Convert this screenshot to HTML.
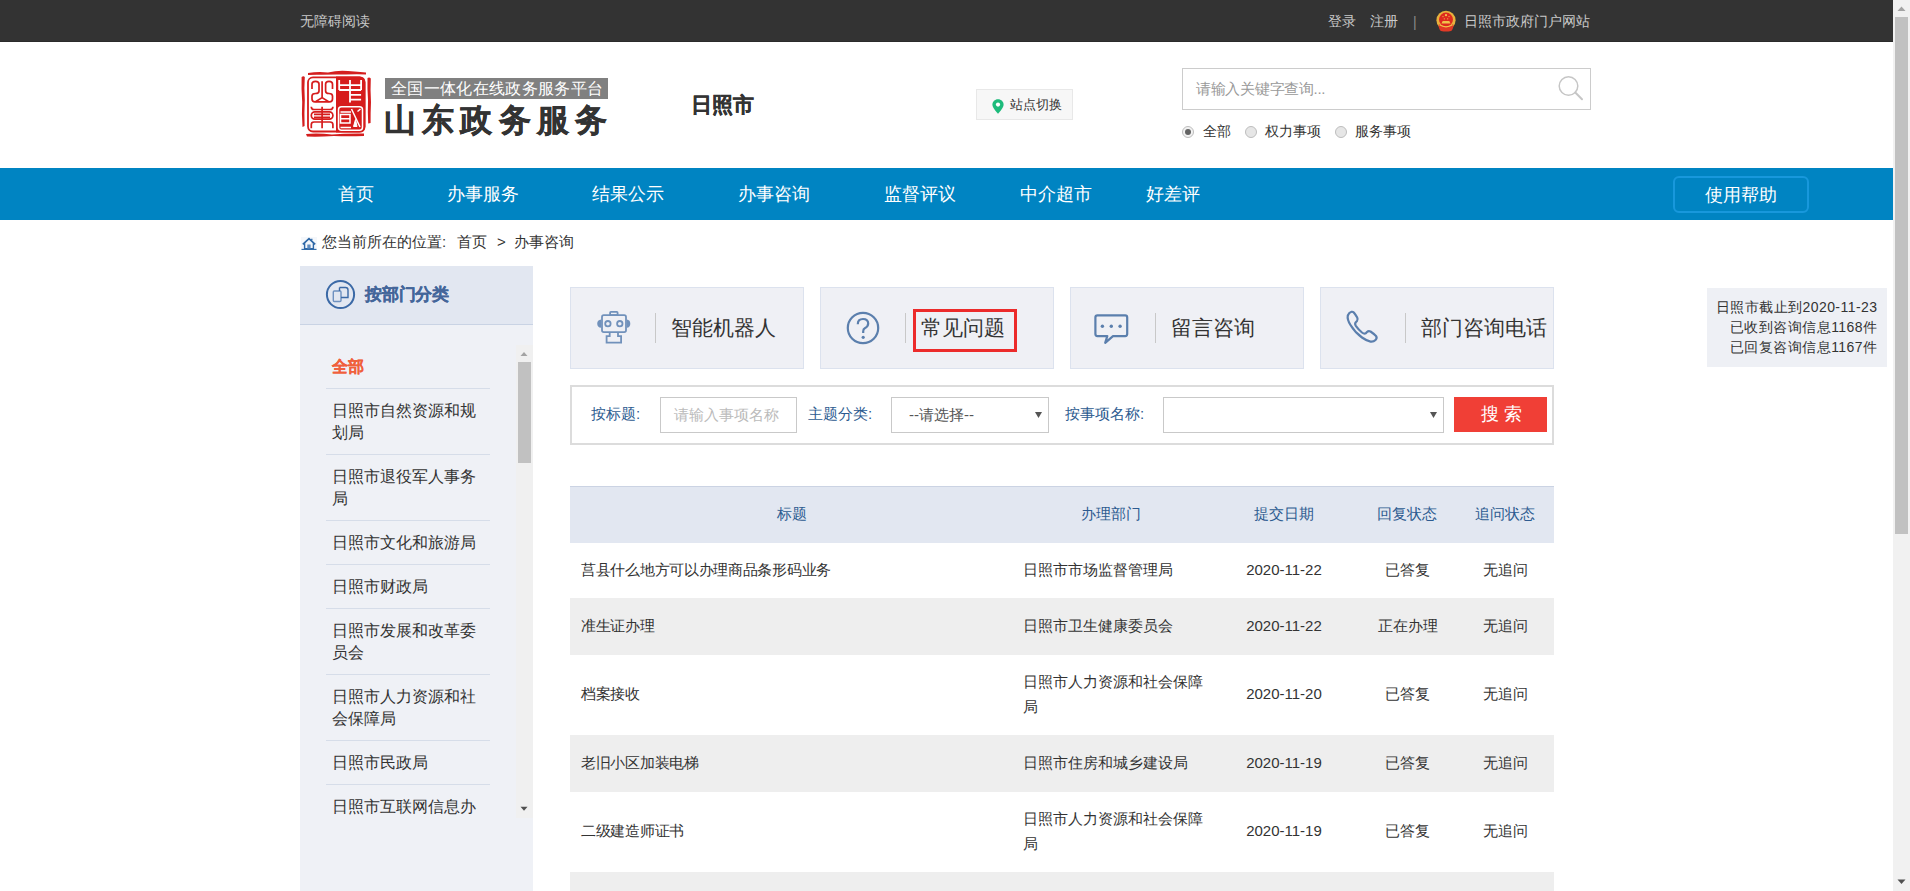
<!DOCTYPE html>
<html><head><meta charset="utf-8">
<style>
*{margin:0;padding:0;box-sizing:border-box}
html,body{width:1910px;height:891px;overflow:hidden;background:#fff}
body{font-family:"Liberation Sans",sans-serif;color:#333;position:relative}
.a{position:absolute;white-space:nowrap}
/* top bar */
#top{position:absolute;left:0;top:0;width:1893px;height:42px;background:#333;border-bottom:1px solid #2b2b2b}
#top .t{position:absolute;top:11px;font-size:14px;line-height:20px;color:#c9c9c9;white-space:nowrap}
/* header */
#banner{position:absolute;left:385px;top:78px;width:223px;height:21px;background:#808080;color:#fff;font-size:16px;line-height:21px;padding-left:6px;letter-spacing:0.35px;white-space:nowrap}
#title{position:absolute;left:384px;top:100px;font-size:32px;line-height:40px;font-weight:bold;-webkit-text-stroke:0.4px #333;color:#333;letter-spacing:6.2px;white-space:nowrap}
#city{position:absolute;left:691px;top:91px;font-size:21px;line-height:28px;font-weight:bold;-webkit-text-stroke:0.3px #333;color:#333;white-space:nowrap}
#switch{position:absolute;left:976px;top:89px;width:97px;height:31px;background:#f7f7f7;border:1px solid #e8e8e8}
#switch span{position:absolute;left:33px;top:6px;font-size:13px;line-height:18px;color:#333}
#search{position:absolute;left:1182px;top:68px;width:409px;height:42px;border:1px solid #ccc}
#search span{position:absolute;left:13px;top:10px;letter-spacing:-0.3px;font-size:15px;line-height:20px;color:#999}
.radio{position:absolute;top:126px;width:12px;height:12px;border-radius:50%;border:1px solid #bdbdbd;background:#e6e6e6}
.rl{position:absolute;top:121px;font-size:14px;line-height:20px;color:#333}
/* nav */
#nav{position:absolute;left:0;top:168px;width:1893px;height:52px;background:#0084c2}
#nav .n{position:absolute;top:13px;font-size:18px;line-height:26px;color:#fff;white-space:nowrap}
#help{position:absolute;left:1673px;top:8px;width:136px;height:37px;border:2px solid #1898dc;border-radius:6px}
/* breadcrumb */
#crumb{position:absolute;top:232px;font-size:15px;line-height:20px;color:#333;white-space:nowrap}
/* sidebar */
#side{position:absolute;left:300px;top:266px;width:233px;height:625px;background:#eff1f6}
#sidehd{position:absolute;left:0;top:0;width:233px;height:59px;background:#e2e7f1;border-bottom:1px solid #c9d3e4}
#sidehd span{position:absolute;left:65px;top:17px;font-size:17px;line-height:24px;font-weight:bold;color:#44669a;-webkit-text-stroke:0.25px #44669a;letter-spacing:-0.2px}
.si{position:absolute;left:26px;width:164px;height:45px;border-bottom:1px solid #d6dde9;font-size:16px;line-height:22px;padding:12px 0 0 6px;color:#333}
/* cards */
.card{position:absolute;top:287px;width:234px;height:82px;background:#eff0f5;border:1px solid #dce2ee}
.card .dv{position:absolute;left:84px;top:25px;width:1px;height:30px;background:#c8c8c8}
.card .ct{position:absolute;left:100px;top:25px;font-size:21px;line-height:30px;color:#333;white-space:nowrap}
.card svg{position:absolute}
/* form */
#form{position:absolute;left:570px;top:385px;width:984px;height:60px;border:2px solid #dcdcdc}
.fl{position:absolute;top:404px;font-size:15px;line-height:20px;color:#2d5b90;white-space:nowrap}
.fi{position:absolute;top:397px;height:36px;border:1px solid #c9c9c9;background:#fff}
/* table */
#thead{position:absolute;left:570px;top:486px;width:984px;height:57px;background:#e2e7f1;border-top:1px solid #cbd3e3}
.th{position:absolute;top:504px;font-size:15px;line-height:20px;color:#2d5b90;white-space:nowrap}
.row{position:absolute;left:570px;width:984px}
.td{position:absolute;font-size:15px;line-height:25px;color:#333;white-space:nowrap}
.td.c{text-align:center;font-size:15px}
/* info */
#info{position:absolute;left:1707px;top:288px;width:180px;height:79px;background:#eef0f5;text-align:right;padding:9px 9.5px 0 0;font-size:14px;line-height:20px;letter-spacing:0.45px;color:#333}
/* scrollbar */
#sb{position:absolute;left:1893px;top:0;width:17px;height:891px;background:#f1f1f1}
#sbthumb{position:absolute;left:2px;top:17px;width:13px;height:517px;background:#c1c1c1}
</style></head><body>

<div id="top">
  <div class="t" style="left:300px">无障碍阅读</div>
  <div class="t" style="left:1328px">登录</div>
  <div class="t" style="left:1370px">注册</div>
  <div class="t" style="left:1413px;top:12px;color:#8a8a8a">|</div>
  <svg style="position:absolute;left:1436px;top:10px" width="21" height="22" viewBox="0 0 21 22">
    <circle cx="10" cy="10.3" r="9.6" fill="#e8b13c"/>
    <circle cx="10" cy="9.6" r="7" fill="#dd2a1f"/>
    <circle cx="10" cy="5.2" r="1.1" fill="#f3c44b"/>
    <circle cx="7" cy="6.6" r="0.6" fill="#f3c44b"/><circle cx="13" cy="6.6" r="0.6" fill="#f3c44b"/>
    <circle cx="8.3" cy="8.8" r="0.6" fill="#f3c44b"/><circle cx="11.7" cy="8.8" r="0.6" fill="#f3c44b"/>
    <path d="M5.5 13.6 L14.5 13.6 L13.3 11 L6.7 11Z" fill="#f0c24a"/>
    <path d="M3 14 Q10 18.5 17 14 L17.5 16 Q16.5 20.5 15 21 Q10 22 5 21 Q3.5 20.5 2.5 16Z" fill="#e13a26"/>
    <path d="M3.5 14.8 Q10 18.8 16.5 14.8" stroke="#f3c44b" stroke-width="1.3" fill="none"/>
  </svg>
  <div class="t" style="left:1464px">日照市政府门户网站</div>
</div>

<!-- logo seal -->
<svg style="position:absolute;left:298px;top:66px" width="76" height="76" viewBox="0 0 76 76">
  <g fill="#d41e1e">
    <path d="M10 7 Q20 5.5 30 6.5 Q40 4 50 5 Q60 5.5 68 6.5 L68 8.5 Q58 8 48 8.6 Q36 8.2 24 8.8 Q16 8.6 10 9Z"/>
    <path d="M3.6 11 Q5.5 9.5 6.8 11 Q6 22 6.8 34 Q6.2 46 6.6 60 L4.5 61 Q3.5 48 4.2 36 Q3.2 22 3.6 11Z"/>
    <path d="M69.5 12 Q71.5 11 72.8 12.5 Q72.2 24 73 36 Q72.5 47 72.6 57 L70.2 57.5 Q69.6 46 70 34 Q69.2 22 69.5 12Z"/>
    <path d="M8 68 Q20 67 34 68.5 Q48 67.2 66 67.5 L66 70 Q50 70.5 36 70 Q20 71 9 70.5Z"/>
  </g>
  <rect x="10" y="11.3" width="56.5" height="54.2" rx="5" fill="#fff" stroke="#d61c1c" stroke-width="1.8"/>
  <path d="M38 10.4 H61.5 Q67.4 10.4 67.4 16.4 V60.4 Q67.4 66.4 61.5 66.4 H38Z" fill="#d61c1c"/>
  <g stroke="#fff" stroke-width="1.8" fill="none">
    <path d="M41.2 14 V24 M63.1 14 V24 M52 14 V36.5 M41.2 19.1 H63.1 M41.2 24 H63.1 M52 28.9 H63.1 M52 33.7 H63.1"/>
  </g>
  <g stroke="#fff" stroke-width="1.5" fill="none">
    <rect x="40.5" y="40.7" width="24" height="23.6" rx="3"/>
    <path d="M42.5 45.9 H53 M42.5 48.5 H52 V57 H42.5Z M42.5 52.7 H52 M42.5 61.5 H53 M53.5 43 L62 61 M59.5 45.5 L62.5 43"/>
    <path d="M55.5 60.5 L57.5 53.5 L59 60.5Z" fill="#fff" stroke-width="1"/>
  </g>
  <g stroke="#d61c1c" stroke-width="1.7" fill="none">
    <path d="M14 23 V18 Q14 15.3 17.5 15.3 Q21 15.3 21 18 V25 Q21 27.5 17.5 27.5 Q14 27.5 14 30 V33 Q14 35.8 17 35.8 H31.5 Q34.5 35.8 34.5 33 V30 Q34.5 27.5 31 27.5 Q27.6 27.5 27.6 25 V18 Q27.6 15.3 31 15.3 Q34.5 15.3 34.5 18 V23"/>
    <path d="M24.1 15.3 V31.6 L17.5 35.8 M24.1 31.6 L30.7 35.8"/>
    <path d="M24.1 40.7 V62.2 M13.3 40.7 Q13.3 43.5 16 43.5 H32 Q34.9 43.5 34.9 40.7"/>
    <rect x="13.3" y="45.9" width="21.6" height="7.3" rx="3.6"/>
    <path d="M16 48.3 H32 M16 51.3 H32 M13.3 62.2 V58.5 Q13.3 56 16 56 H32 Q34.9 56 34.9 58.5 V62.2"/>
  </g>
</svg>
<div id="banner">全国一体化在线政务服务平台</div>
<div id="title">山东政务服务</div>
<div id="city">日照市</div>

<div id="switch">
  <svg style="position:absolute;left:15px;top:9px" width="12" height="15" viewBox="0 0 12 15">
    <path d="M6 0.3 C2.8 0.3 0.4 2.7 0.4 5.8 C0.4 9.2 6 14.7 6 14.7 C6 14.7 11.6 9.2 11.6 5.8 C11.6 2.7 9.2 0.3 6 0.3Z" fill="#1dbb7b"/>
    <circle cx="6" cy="5.6" r="2.1" fill="#fff"/>
  </svg>
  <span>站点切换</span>
</div>

<div id="search">
  <span>请输入关键字查询...</span>
  <svg style="position:absolute;left:374px;top:6px" width="28" height="28" viewBox="0 0 28 28">
    <circle cx="11.5" cy="11" r="9.3" fill="none" stroke="#c6c6c6" stroke-width="1.5"/>
    <path d="M18.3 17.5 L25 24.2" stroke="#c6c6c6" stroke-width="2" stroke-linecap="round"/>
  </svg>
</div>
<div class="radio" style="left:1182px;background:#f2f2f2"><div style="position:absolute;left:2px;top:2px;width:6px;height:6px;border-radius:50%;background:#636363"></div></div>
<div class="rl" style="left:1203px">全部</div>
<div class="radio" style="left:1245px"></div>
<div class="rl" style="left:1265px">权力事项</div>
<div class="radio" style="left:1335px"></div>
<div class="rl" style="left:1355px">服务事项</div>

<div id="nav">
  <div class="n" style="left:338px">首页</div>
  <div class="n" style="left:447px">办事服务</div>
  <div class="n" style="left:592px">结果公示</div>
  <div class="n" style="left:738px">办事咨询</div>
  <div class="n" style="left:884px">监督评议</div>
  <div class="n" style="left:1020px">中介超市</div>
  <div class="n" style="left:1146px">好差评</div>
  <div id="help"><div class="n" style="left:30px;top:4px">使用帮助</div></div>
</div>

<!-- breadcrumb -->
<svg style="position:absolute;left:301px;top:237px" width="16" height="13" viewBox="0 0 16 13">
  <rect x="0" y="0" width="16" height="13" fill="#f4f7fb"/>
  <path d="M1.8 7.3 L8 1.6 L14.2 7.3" fill="none" stroke="#2d67a6" stroke-width="1.7"/>
  <path d="M10.8 3.2 V1.8" stroke="#2d67a6" stroke-width="1.3"/>
  <path d="M3.6 6.2 V11.8 H12.4 V6.2" fill="none" stroke="#2d67a6" stroke-width="1.4"/>
  <rect x="6.3" y="7.5" width="3.3" height="4.2" fill="#5f8cbf"/>
  <path d="M0.5 12.4 H15.5" stroke="#2d67a6" stroke-width="1.1"/>
</svg>
<div id="crumb" style="left:322px">您当前所在的位置:</div>
<div id="crumb" style="left:457px">首页</div>
<div id="crumb" style="left:497px">&gt;</div>
<div id="crumb" style="left:514px">办事咨询</div>

<!-- sidebar -->
<div id="side">
  <div id="sidehd">
    <svg style="position:absolute;left:25px;top:13px" width="31" height="31" viewBox="0 0 31 31">
      <circle cx="15.5" cy="15.5" r="13.6" fill="none" stroke="#3b69a6" stroke-width="2"/>
      <rect x="8.3" y="12" width="7.7" height="10.5" rx="1" fill="none" stroke="#6e91c0" stroke-width="1.4"/>
      <path d="M14.5 8.5 H20.5 Q23 8.5 23 11 V18.5 H16" fill="none" stroke="#3b69a6" stroke-width="1.4"/>
      <path d="M14.5 8.5 V12" fill="none" stroke="#3b69a6" stroke-width="1.4"/>
    </svg>
    <span>按部门分类</span>
  </div>
  <div class="si" style="top:78px;color:#f0603c;font-weight:bold;-webkit-text-stroke:0.2px #f0603c">全部</div>
  <div class="si" style="top:122px;height:67px">日照市自然资源和规<br>划局</div>
  <div class="si" style="top:188px;height:67px">日照市退役军人事务<br>局</div>
  <div class="si" style="top:254px">日照市文化和旅游局</div>
  <div class="si" style="top:298px">日照市财政局</div>
  <div class="si" style="top:342px;height:67px">日照市发展和改革委<br>员会</div>
  <div class="si" style="top:408px;height:67px">日照市人力资源和社<br>会保障局</div>
  <div class="si" style="top:474px">日照市民政局</div>
  <div class="si" style="top:518px;border-bottom:none">日照市互联网信息办</div>
  <!-- inner scrollbar -->
  <div style="position:absolute;left:216px;top:79px;width:17px;height:473px;background:#f0f0f0"></div>
  <div style="position:absolute;left:218px;top:96px;width:13px;height:101px;background:#c1c1c1"></div>
  <svg style="position:absolute;left:216px;top:79px" width="17" height="473"><path d="M4.5 11 L8 7 L11.5 11Z" fill="#a3a3a3"/><path d="M4.5 461.8 H11.5 L8 465.8Z" fill="#505050"/></svg>
</div>

<!-- cards -->
<div class="card" style="left:570px">
  <svg style="left:26px;top:23px" width="35" height="35" viewBox="0 0 35 35">
    <g fill="none" stroke="#7191bb" stroke-width="1.8">
      <rect x="5" y="4.2" width="24" height="16.9" rx="1.8"/>
      <rect x="13.1" y="0.9" width="7.5" height="3.3" rx="0.8"/>
      <circle cx="10.9" cy="12.7" r="2.7"/>
      <circle cx="22.8" cy="12.7" r="2.7"/>
      <path d="M12.7 21.1 V25.2 H9.6 V31.7 H24.1 V25.2 H21 V21.1"/>
    </g>
    <path d="M4.2 8.6 Q0.2 9 0.2 12.65 Q0.2 16.3 4.2 16.7Z" fill="#7191bb"/>
    <path d="M29.8 8.6 Q33.3 9 33.3 12.65 Q33.3 16.3 29.8 16.7Z" fill="#7191bb"/>
  </svg>
  <div class="dv"></div>
  <div class="ct">智能机器人</div>
</div>
<div class="card" style="left:820px">
  <svg style="left:25px;top:23px" width="34" height="34" viewBox="0 0 34 34">
    <circle cx="17" cy="17" r="15.2" fill="none" stroke="#5b7fad" stroke-width="2.2"/>
    <path d="M11.8 13.2 Q11.8 8 17 8 Q22.2 8 22.2 12.6 Q22.2 15.6 18.8 17.2 Q17.2 18 17.2 20.5 V22" fill="none" stroke="#5b7fad" stroke-width="2.2"/>
    <circle cx="17.2" cy="26.3" r="1.6" fill="#5b7fad"/>
  </svg>
  <div class="dv"></div>
  <div style="position:absolute;left:92px;top:21px;width:104px;height:43px;border:3px solid #ec2b2b"></div>
  <div class="ct">常见问题</div>
</div>
<div class="card" style="left:1070px">
  <svg style="left:22px;top:25px" width="38" height="34" viewBox="0 0 38 34">
    <path d="M4.4 2.4 H32.2 Q34.2 2.4 34.2 4.4 V21.1 Q34.2 23.1 32.2 23.1 H20 L12.2 29.8 L14.3 23.1 H4.4 Q2.4 23.1 2.4 21.1 V4.4 Q2.4 2.4 4.4 2.4Z" fill="none" stroke="#5b7fad" stroke-width="2.2" stroke-linejoin="round"/>
    <circle cx="9.4" cy="13.3" r="1.7" fill="#5b7fad"/>
    <circle cx="18.3" cy="13.3" r="1.7" fill="#5b7fad"/>
    <circle cx="27.1" cy="13.3" r="1.7" fill="#5b7fad"/>
  </svg>
  <div class="dv"></div>
  <div class="ct">留言咨询</div>
</div>
<div class="card" style="left:1320px">
  <svg style="left:24px;top:21px" width="36" height="36" viewBox="0 0 36 36">
    <path d="M6.5 2.8 Q4 3.5 2.8 6.5 Q2 10.5 5.5 16 Q10 23.5 17 28.5 Q22 32 25.5 32.6 Q28.5 33 30.5 31 Q32.5 29 31 27 Q28.5 24.5 25.5 22.5 Q23.5 21.5 22 23 L20.8 24.3 Q19.2 25.2 17 23.5 Q13.5 20.5 10.8 16.8 Q9.5 14.6 10.8 13.2 L12 12 Q13.2 10.5 12.2 8.5 Q10.5 5.5 8.8 3.5 Q7.8 2.5 6.5 2.8Z" fill="none" stroke="#5b7fad" stroke-width="2.2" stroke-linejoin="round"/>
  </svg>
  <div class="dv"></div>
  <div class="ct">部门咨询电话</div>
</div>

<div id="info">日照市截止到2020-11-23<br>已收到咨询信息1168件<br>已回复咨询信息1167件</div>

<!-- form -->
<div id="form"></div>
<div class="fl" style="left:591px">按标题:</div>
<div class="fi" style="left:660px;width:137px"><span style="position:absolute;left:13px;top:7px;font-size:15px;line-height:20px;color:#bbb;white-space:nowrap">请输入事项名称</span></div>
<div class="fl" style="left:808px">主题分类:</div>
<div class="fi" style="left:891px;width:158px"><span style="position:absolute;left:17px;top:7px;font-size:15px;line-height:20px;color:#555;white-space:nowrap">--请选择--</span>
  <svg style="position:absolute;left:143px;top:14px" width="7" height="6"><path d="M0 0 H7 L3.5 6Z" fill="#555"/></svg></div>
<div class="fl" style="left:1065px">按事项名称:</div>
<div class="fi" style="left:1163px;width:281px">
  <svg style="position:absolute;left:266px;top:14px" width="7" height="6"><path d="M0 0 H7 L3.5 6Z" fill="#555"/></svg></div>
<div style="position:absolute;left:1454px;top:397px;width:93px;height:35px;background:#f03f36;color:#fff;font-size:18px;line-height:35px;text-align:left;letter-spacing:4.5px;padding-left:27px;white-space:nowrap">搜索</div>

<!-- table -->
<div id="thead"></div>
<div class="th" style="left:777px">标题</div>
<div class="th" style="left:1081px">办理部门</div>
<div class="th" style="left:1254px">提交日期</div>
<div class="th" style="left:1377px">回复状态</div>
<div class="th" style="left:1475px">追问状态</div>

<div class="row" style="top:543px;height:55px;background:#fff">
  <div class="td" style="letter-spacing:-0.3px;left:11px;top:14px">莒县什么地方可以办理商品条形码业务</div>
  <div class="td" style="left:453px;top:14px">日照市市场监督管理局</div>
  <div class="td c" style="left:639px;width:150px;top:14px">2020-11-22</div>
  <div class="td c" style="left:789px;width:97px;top:14px">已答复</div>
  <div class="td c" style="left:886px;width:98px;top:14px">无追问</div>
</div>
<div class="row" style="top:598px;height:57px;background:#eee">
  <div class="td" style="letter-spacing:-0.3px;left:11px;top:15px">准生证办理</div>
  <div class="td" style="left:453px;top:15px">日照市卫生健康委员会</div>
  <div class="td c" style="left:639px;width:150px;top:15px">2020-11-22</div>
  <div class="td c" style="left:789px;width:97px;top:15px">正在办理</div>
  <div class="td c" style="left:886px;width:98px;top:15px">无追问</div>
</div>
<div class="row" style="top:655px;height:80px;background:#fff">
  <div class="td" style="letter-spacing:-0.3px;left:11px;top:26px">档案接收</div>
  <div class="td" style="left:453px;top:14px">日照市人力资源和社会保障<br>局</div>
  <div class="td c" style="left:639px;width:150px;top:26px">2020-11-20</div>
  <div class="td c" style="left:789px;width:97px;top:26px">已答复</div>
  <div class="td c" style="left:886px;width:98px;top:26px">无追问</div>
</div>
<div class="row" style="top:735px;height:57px;background:#eee">
  <div class="td" style="letter-spacing:-0.3px;left:11px;top:15px">老旧小区加装电梯</div>
  <div class="td" style="left:453px;top:15px">日照市住房和城乡建设局</div>
  <div class="td c" style="left:639px;width:150px;top:15px">2020-11-19</div>
  <div class="td c" style="left:789px;width:97px;top:15px">已答复</div>
  <div class="td c" style="left:886px;width:98px;top:15px">无追问</div>
</div>
<div class="row" style="top:792px;height:80px;background:#fff">
  <div class="td" style="letter-spacing:-0.3px;left:11px;top:26px">二级建造师证书</div>
  <div class="td" style="left:453px;top:14px">日照市人力资源和社会保障<br>局</div>
  <div class="td c" style="left:639px;width:150px;top:26px">2020-11-19</div>
  <div class="td c" style="left:789px;width:97px;top:26px">已答复</div>
  <div class="td c" style="left:886px;width:98px;top:26px">无追问</div>
</div>
<div class="row" style="top:872px;height:19px;background:#eee"></div>

<!-- page scrollbar -->
<div id="sb">
  <svg style="position:absolute;left:4px;top:6px" width="9" height="6"><path d="M0.5 5 L4.5 0.5 L8.5 5Z" fill="#a3a3a3"/></svg>
  <div id="sbthumb"></div>
  <svg style="position:absolute;left:4px;top:879px" width="9" height="6"><path d="M0.5 0.5 H8.5 L4.5 5Z" fill="#505050"/></svg>
</div>

</body></html>
